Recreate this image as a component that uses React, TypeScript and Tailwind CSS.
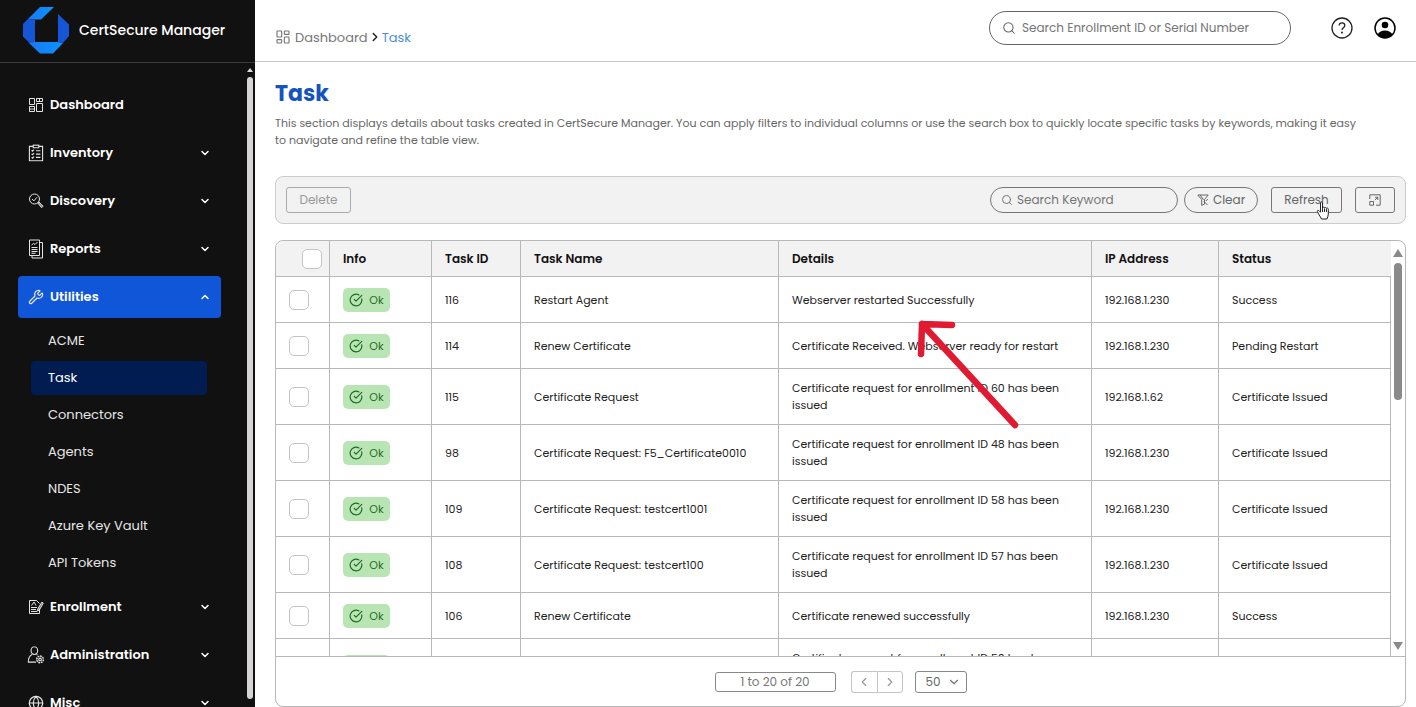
import React, { useState } from 'react';
import {
  ChevronDown,
  ChevronLeft,
  ChevronRight,
  ChevronUp,
  CircleCheckBig,
  Globe,
  LayoutDashboard,
  Search,
  Wrench,
} from 'lucide-react';

type NavItem = {
  label: string;
  icon: React.ReactNode;
  children?: string[];
  expandable?: boolean;
};

type TaskRow = {
  id: number;
  name: string;
  details: string;
  ip: string;
  status: string;
};

const TASKS: TaskRow[] = [
  { id: 116, name: 'Restart Agent', details: 'Webserver restarted Successfully', ip: '192.168.1.230', status: 'Success' },
  { id: 114, name: 'Renew Certificate', details: 'Certificate Received. Webserver ready for restart', ip: '192.168.1.230', status: 'Pending Restart' },
  { id: 115, name: 'Certificate Request', details: 'Certificate request for enrollment ID 60 has been issued', ip: '192.168.1.62', status: 'Certificate Issued' },
  { id: 98, name: 'Certificate Request: F5_Certificate0010', details: 'Certificate request for enrollment ID 48 has been issued', ip: '192.168.1.230', status: 'Certificate Issued' },
  { id: 109, name: 'Certificate Request: testcert1001', details: 'Certificate request for enrollment ID 58 has been issued', ip: '192.168.1.230', status: 'Certificate Issued' },
  { id: 108, name: 'Certificate Request: testcert100', details: 'Certificate request for enrollment ID 57 has been issued', ip: '192.168.1.230', status: 'Certificate Issued' },
  { id: 106, name: 'Renew Certificate', details: 'Certificate renewed successfully', ip: '192.168.1.230', status: 'Success' },
  { id: 105, name: 'Certificate Request', details: 'Certificate request for enrollment ID 50 has been issued', ip: '192.168.1.230', status: 'Certificate Issued' },
];

const Logo = () => (
  <svg className="h-12 w-12 shrink-0" viewBox="0 0 48 48" aria-hidden="true">
    <defs>
      <linearGradient id="logoLight" x1="0" y1="0" x2="1" y2="0">
        <stop offset="0" stopColor="#1a78f0" />
        <stop offset="1" stopColor="#0a93ff" />
      </linearGradient>
    </defs>
    <path d="M18 0h14L19 12.500h-6l-7-.5z" fill="url(#logoLight)" />
    <path d="M6 12l7 .5v23l-5 1-7-7V17z" fill="#1556d6" />
    <path d="M7 36l6-1h23l5 1-10 10.500H18z" fill="url(#logoLight)" />
    <path d="M36 7l11 10.500V29l-6 7-5-1z" fill="#1556d6" />
  </svg>
);

const GridIcon = () => (
  <svg className="h-4 w-4" viewBox="0 0 16 16" fill="none" stroke="currentColor">
    <path d="M1.500 1.500h5v6h-5zM8.500 1.500h6v3h-6zM1.500 9.500h5v5h-5zM8.500 6.500h6v8h-6zM11.500 1.500v3M1.500 12h5" />
  </svg>
);

const ClipboardIcon = () => (
  <svg className="h-4 w-4 scale-110" viewBox="0 0 16 16" fill="none" stroke="currentColor">
    <path d="M5 2H2v13h12V2h-3M5.500.8h5v2.400h-5z" />
    <path d="M4 5.500l.8.8 1.400-1.400M4 8.700l.8.8 1.400-1.400M4 11.900l.8.8 1.400-1.400M8 6h4M8 9h4M8 12h4" />
  </svg>
);

const DiscoveryIcon = () => (
  <svg className="h-4 w-4" viewBox="0 0 16 16" fill="none" stroke="currentColor">
    <circle cx="6.500" cy="6" r="5" />
    <path d="M4 6l1.800 1.900L9 4.300" />
    <path d="M9.800 10l1.200-1 4 4.200-1.400 1.500z" fill="currentColor" fillOpacity="0.500" />
  </svg>
);

const ReportIcon = () => (
  <svg className="h-5 w-4" viewBox="0 0 16 20" fill="none" stroke="currentColor">
    <path d="M1.500 1h10v15.500h-10z" />
    <path d="M12 3.500h2.500V19H4v-2.500" />
    <path d="M3.500 6l2-1.500 1.500 1L9.500 3M3.500 8.500h6M3.500 10.500h6M3.500 12.500h6M3.500 14.300h4" />
  </svg>
);

const EnrollmentIcon = () => (
  <svg className="h-4 w-4" viewBox="0 0 16 16" fill="none" stroke="currentColor">
    <path d="M11.500 9.500v5H1.500v-13h7l3 3" />
    <path d="M3.500 6.500L6 3l2 3.500M3 8.500h6M3 10.500h5M3 12.500h6" />
    <path d="M13.800 3.200l1.500.9-4 7-1.900 1 .3-2z" fill="currentColor" fillOpacity="0.500" />
  </svg>
);

const AdminIcon = () => (
  <svg className="h-4 w-4 scale-110" viewBox="0 0 16 16" fill="none" stroke="currentColor">
    <ellipse cx="6.500" cy="4" rx="3" ry="3.500" />
    <path d="M4.500 7.500C2 8.500 1 10.500 1 14.500h7M8.500 7.500l1 .6" />
    <circle cx="11.700" cy="12" r="1.200" />
    <circle cx="11.700" cy="12" r="3" strokeDasharray="1.600 .7" strokeWidth="1.400" />
  </svg>
);

const FilterOffIcon = () => (
  <svg className="h-3 w-3" viewBox="0 0 12 12" fill="none" stroke="currentColor">
    <path d="M.8 1h10.400L7.500 5.500V10l-2.800 1.400V5.500z" />
    <path d="M3 .8l3.500 5M7 7.500l3.500 3.500M10.800 5l-2 2" />
  </svg>
);

const ExpandIcon = () => (
  <svg className="h-3 w-3" viewBox="0 0 12 12" fill="none" stroke="currentColor">
    <path d="M.8 5V.8h10.400v10.400H7" />
    <path d="M.8 7.500h3.700v3.700H.8zM5.800 6.200l3-3M6 3.200h2.800V6" />
  </svg>
);

const HelpIcon = () => (
  <svg className="h-[22px] w-[22px]" viewBox="0 0 22 22" fill="none" stroke="#222222" strokeWidth="1.300">
    <circle cx="11" cy="11" r="10" />
    <path d="M8.200 8.600c0-1.700 1.200-2.800 2.800-2.800s2.800 1.100 2.800 2.600c0 2.200-2.800 2.300-2.800 4.500" />
    <circle cx="11" cy="15.600" r=".4" fill="#222222" />
  </svg>
);

const UserIcon = () => (
  <svg className="h-[22px] w-[22px]" viewBox="0 0 22 22">
    <circle cx="11" cy="11" r="10" fill="none" stroke="currentColor" strokeWidth="1.500" />
    <circle cx="11" cy="8" r="3.300" fill="currentColor" />
    <path d="M3.500 17.500C5 14.800 8 13.500 11 13.500s6 1.300 7.500 4C16.500 20 14 21 11 21s-5.500-1-7.500-3.500z" fill="currentColor" />
  </svg>
);

const NAV: NavItem[] = [
  { label: 'Dashboard', icon: <GridIcon /> },
  { label: 'Inventory', icon: <ClipboardIcon />, expandable: true },
  { label: 'Discovery', icon: <DiscoveryIcon />, expandable: true },
  { label: 'Reports', icon: <ReportIcon />, expandable: true },
  {
    label: 'Utilities',
    icon: <Wrench className="h-4 w-4" strokeWidth={1.8} />,
    expandable: true,
    children: ['ACME', 'Task', 'Connectors', 'Agents', 'NDES', 'Azure Key Vault', 'API Tokens'],
  },
  { label: 'Enrollment', icon: <EnrollmentIcon />, expandable: true },
  { label: 'Administration', icon: <AdminIcon />, expandable: true },
  { label: 'Misc', icon: <Globe className="h-4 w-4" strokeWidth={1.8} />, expandable: true },
];

const Sidebar = () => {
  const [open, setOpen] = useState('Utilities');

  return (
    <aside className="flex w-[255px] shrink-0 flex-col bg-[#111111] text-white">
      <div className="flex h-[63px] shrink-0 items-center gap-[9px] border-b border-[#3a3a3a] pl-[22px]">
        <Logo />
        <span className="pb-0.5 text-sm font-medium">CertSecure Manager</span>
      </div>
      <div className="flex min-h-0 flex-1">
        <nav className="flex min-w-0 flex-1 flex-col gap-1.5 overflow-hidden pt-[21px] pr-[26px] pl-[18px]">
          {NAV.map(item => {
            const active = item.label === open;
            return (
              <React.Fragment key={item.label}>
                <button
                  type="button"
                  onClick={() => setOpen(item.label)}
                  className={`flex h-[42px] shrink-0 items-center gap-1.5 rounded px-2.5 text-left text-[13px] font-semibold ${active ? 'bg-[#0f56d8]' : ''}`}
                >
                  <span className="flex w-4 justify-center text-[#e4e4e4]">{item.icon}</span>
                  <span className="flex-1">{item.label}</span>
                  {item.expandable && (active ? <ChevronUp className="h-3 w-3" strokeWidth={3} /> : <ChevronDown className="h-3 w-3" strokeWidth={3} />)}
                </button>
                {active && item.children && (
                  <ul className="flex shrink-0 flex-col gap-[3px] pr-3.5 pl-[13px]">
                    {item.children.map(child => (
                      <li key={child}>
                        <a
                          href="#"
                          className={`flex h-[34px] items-center rounded-sm pl-[17px] text-[13px] ${child === 'Task' ? 'bg-[#001c50]' : 'text-[#e6e6e6]'}`}
                        >
                          {child}
                        </a>
                      </li>
                    ))}
                  </ul>
                )}
              </React.Fragment>
            );
          })}
        </nav>
        <div className="flex w-2 shrink-0 flex-col items-center gap-1 pt-1 pr-0.5 pb-2">
          <svg className="h-1.5 w-1.5 shrink-0" viewBox="0 0 6 6"><path d="M3 1l3 4H0z" fill="#dddddd" /></svg>
          <div className="w-1.5 flex-1 rounded-full bg-[#d6d4d5]" />
        </div>
      </div>
    </aside>
  );
};

const Header = () => (
  <header className="flex h-[62px] shrink-0 items-start justify-between border-b border-[#c9c9c9] px-5">
    <nav aria-label="Breadcrumb" className="flex items-center self-end pb-3.5 text-[13px] text-[#777777]">
      <LayoutDashboard className="mr-1 h-4 w-4" strokeWidth={1.7} />
      <a href="#">Dashboard</a>
      <ChevronRight className="h-3.5 w-3.5 text-[#222222]" strokeWidth={2.5} />
      <a href="#" className="text-[#4a8fe0]">Task</a>
    </nav>
    <div className="flex items-center pt-[11px]">
      <label className="flex h-[34px] w-[302px] items-center gap-1.5 rounded-full border border-[#666666] px-3 text-[#666666]">
        <Search className="h-3.5 w-3.5 shrink-0" strokeWidth={1.8} />
        <input
          type="search"
          aria-label="Search enrollments"
          placeholder="Search Enrollment ID or Serial Number"
          className="min-w-0 flex-1 text-xs outline-none placeholder:text-[#757575]"
        />
      </label>
      <button type="button" aria-label="Help" className="ml-10"><HelpIcon /></button>
      <button type="button" aria-label="Account" className="ml-[21px]"><UserIcon /></button>
    </div>
  </header>
);

const HandCursor = () => (
  <svg className="pointer-events-none absolute top-3.5 left-[45px] h-5 w-4" viewBox="0 0 16 20">
    <path
      d="M4.500 2c0-1.400 2-1.400 2 0v5.500l.2-.8c.4-1 1.700-.7 1.800.3.500-.9 1.800-.6 1.900.4.600-.7 1.900-.4 1.900.8V13c0 2-.8 3.300-1.400 5H5.500c-.4-1.500-1.700-2.700-2.600-4.500L1.400 10.600c-.4-1 .8-1.700 1.600-.9l1.500 1.500z"
      fill="#ffffff"
      stroke="#222222"
    />
    <path d="M6.500 7.500V11M8.500 7.500V11M10.400 8V11" stroke="#222222" fill="none" />
  </svg>
);

const Toolbar = () => (
  <div className="mt-[27px] flex h-12 shrink-0 items-center rounded-lg border border-[#cccccc] bg-[#f2f2f2] px-2.5 text-xs text-[#666666]">
    <button type="button" disabled className="h-[26px] w-[65px] rounded-[3px] border border-[#aaaaaa] text-[#999999]">Delete</button>
    <label className="ml-auto flex h-[26px] w-[188px] items-center gap-1 rounded-full border border-[#777777] px-2.5">
      <Search className="h-3 w-3 shrink-0" strokeWidth={1.8} />
      <input
        type="search"
        aria-label="Search tasks"
        placeholder="Search Keyword"
        className="min-w-0 flex-1 outline-none placeholder:text-[#757575]"
      />
    </label>
    <button type="button" className="ml-1.5 flex h-[26px] w-[74px] items-center justify-center gap-1 rounded-full border border-[#777777]">
      <FilterOffIcon />
      Clear
    </button>
    <div className="relative ml-[13px]">
      <button type="button" className="block h-[26px] w-[71px] rounded-[3px] border border-[#777777]">Refresh</button>
      <HandCursor />
    </div>
    <button type="button" aria-label="Expand table" className="ml-[13px] flex h-[26px] w-10 items-center justify-center rounded-[3px] border border-[#777777]">
      <ExpandIcon />
    </button>
  </div>
);

const Checkbox = ({ label, className = '' }: { label: string; className?: string }) => (
  <input
    type="checkbox"
    aria-label={label}
    className={`block h-5 w-5 appearance-none rounded-[5px] border border-[#c4c4c4] bg-white checked:bg-[#0f56d8] ${className}`}
  />
);

const HEADINGS = ['Info', 'Task ID', 'Task Name', 'Details', 'IP Address', 'Status'];
const CELL = 'border-r border-b border-[#b8b8b8] pt-[11px] pb-2.5 pl-[13px] pr-3';

const TaskTable = () => (
  <table className="w-full table-fixed border-separate border-spacing-0 text-left text-[11px] leading-[17px] text-[#222222]">
    <colgroup>
      <col className="w-[54px]" />
      <col className="w-[102px]" />
      <col className="w-[89px]" />
      <col className="w-[258px]" />
      <col />
      <col className="w-[127px]" />
      <col className="w-[172px]" />
    </colgroup>
    <thead>
      <tr className="h-9 bg-[#f2f2f2]">
        <th className="border-r border-b border-[#b8b8b8]">
          <Checkbox label="Select all tasks" className="ml-[26px]" />
        </th>
        {HEADINGS.map(h => (
          <th key={h} className="border-r border-b border-[#b8b8b8] pl-[13px] text-xs font-semibold text-[#111111] last:border-r-0">{h}</th>
        ))}
      </tr>
    </thead>
    <tbody>
      {TASKS.map(task => (
        <tr key={task.id}>
          <td className={CELL}><Checkbox label={`Select task ${task.id}`} /></td>
          <td className={CELL}>
            <span className="flex h-6 w-[47px] items-center justify-center gap-1.5 rounded-[5px] bg-[#b9e5b5] text-[#1d6b22]">
              <CircleCheckBig className="h-3.5 w-3.5" strokeWidth={2} />
              Ok
            </span>
          </td>
          <td className={CELL}>{task.id}</td>
          <td className={CELL}>{task.name}</td>
          <td className={CELL}>{task.details}</td>
          <td className={CELL}>{task.ip}</td>
          <td className={CELL}>{task.status}</td>
        </tr>
      ))}
    </tbody>
  </table>
);

const Arrow = () => (
  <svg className="pointer-events-none absolute top-[77px] left-[640px] h-[115px] w-[110px]" viewBox="0 0 110 115">
    <path d="M99 107L6 6M36 7L6 6L5 36" fill="none" stroke="#e11931" strokeWidth="6.500" strokeLinecap="round" strokeLinejoin="round" />
  </svg>
);

const Pagination = () => (
  <div className="flex h-[50px] shrink-0 items-center justify-center border-t border-[#b8b8b8] text-xs text-[#777777]">
    <span className="flex h-5 w-[121px] items-center justify-center rounded-[3px] border border-[#888888]">1 to 20 of 20</span>
    <div className="ml-[15px] flex text-[#999999]">
      <button type="button" aria-label="Previous page" className="flex h-[22px] w-[26px] items-center justify-center rounded-l-[3px] border border-r-0 border-[#c4c4c4]">
        <ChevronLeft className="h-3.5 w-3.5" />
      </button>
      <button type="button" aria-label="Next page" className="flex h-[22px] w-[26px] items-center justify-center rounded-r-[3px] border border-[#c4c4c4]">
        <ChevronRight className="h-3.5 w-3.5" />
      </button>
    </div>
    <div className="relative ml-3">
      <select aria-label="Rows per page" defaultValue="50" className="block h-[22px] w-[52px] appearance-none rounded-[3px] border border-[#888888] pl-2.5 text-[#666666]">
        <option>20</option>
        <option>50</option>
        <option>100</option>
      </select>
      <ChevronDown className="pointer-events-none absolute top-1 right-1.5 h-3.5 w-3.5" />
    </div>
  </div>
);

export default function App() {
  return (
    <div className="flex h-screen overflow-hidden bg-white font-['Poppins','Inter',sans-serif]">
      <Sidebar />
      <div className="flex min-w-0 flex-1 flex-col">
        <Header />
        <main className="flex min-h-0 flex-1 flex-col pt-4 pr-2.5 pl-5">
          <h1 className="text-[22px] leading-8 font-bold text-[#1553bd]">Task</h1>
          <p className="mt-[5px] pr-12 text-[11px] leading-[17px] text-[#666666]">
            This section displays details about tasks created in CertSecure Manager. You can apply filters to individual columns or use the search box to quickly locate specific tasks by keywords, making it easy to navigate and refine the table view.
          </p>
          <Toolbar />
          <section className="relative mt-4 flex min-h-0 flex-1 flex-col rounded-lg border border-[#b8b8b8]">
            <div className="flex min-h-0 flex-1 overflow-hidden rounded-t-lg">
              <div className="min-w-0 flex-1 overflow-hidden">
                <TaskTable />
              </div>
              <div className="flex w-3.5 shrink-0 flex-col items-center justify-between pt-2 pb-1.5">
                <div className="flex flex-col items-center gap-1.5">
                  <svg className="h-2 w-2.5" viewBox="0 0 10 8"><path d="M5 0l5 8H0z" fill="#8a8a8a" /></svg>
                  <div className="h-[137px] w-2 rounded-full bg-[#8a8a8a]" />
                </div>
                <svg className="h-2 w-2.5" viewBox="0 0 10 8"><path d="M5 8l5-8H0z" fill="#8a8a8a" /></svg>
              </div>
            </div>
            <Pagination />
            <Arrow />
          </section>
        </main>
      </div>
    </div>
  );
}
